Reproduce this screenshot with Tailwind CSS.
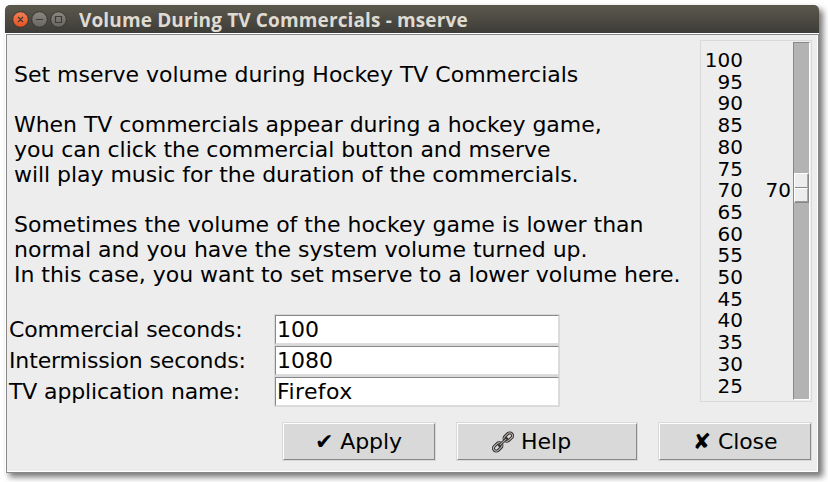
<!DOCTYPE html>
<html lang="en">
<head>
<meta charset="utf-8">
<title>Volume During TV Commercials - mserve</title>
<script src="https://cdn.jsdelivr.net/npm/@tailwindcss/browser@4"></script>
</head>
<body class="w-[828px] h-[482px] overflow-hidden bg-white pt-[5px] pl-[5px] font-['DejaVu_Sans',sans-serif] text-[22px] leading-[25px] text-black">
<main class="w-[814px] h-[468px] rounded-t-[5px] shadow-[4px_4px_6px_rgba(0,0,0,0.55)] bg-white flex flex-col">
  <header class="h-7 shrink-0 rounded-t-[5px] bg-linear-to-b from-[#5b584c] to-[#3d3c38] border-t border-[#55534a] flex items-center">
    <svg class="ml-[7px] shrink-0" width="56" height="18" viewBox="0 0 56 18" fill="none">
      <defs>
        <linearGradient id="r" x2="0" y2="1"><stop stop-color="#f28157"/><stop offset="1" stop-color="#e6501f"/></linearGradient>
        <linearGradient id="g" x2="0" y2="1"><stop stop-color="#8a887f"/><stop offset="1" stop-color="#66655f"/></linearGradient>
      </defs>
      <g stroke="#37352f" stroke-width="1">
        <circle cx="8.5" cy="8.5" r="7.8" fill="url(#r)"/>
        <circle cx="27.5" cy="8.5" r="7.8" fill="url(#g)"/>
        <circle cx="46.5" cy="8.5" r="7.8" fill="url(#g)"/>
      </g>
      <g stroke="#3c3b37" stroke-width="1.2"><path d="M6 6l5 5M11 6l-5 5M24 8.5h7M43.5 5.5h6v6h-6z"/></g>
    </svg>
    <h1 class="ml-[11px] whitespace-nowrap font-['Open_Sans',sans-serif] font-bold text-[19px] leading-[26px] tracking-[0.13px] text-[#dfdbd2]">Volume During TV Commercials - mserve</h1>
  </header>
  <div class="ml-px mt-px w-[813px] h-[439px] border border-[#888] bg-white pr-px pb-px">
    <div class="h-full bg-[#ededed] flex flex-col">
      <div class="flex h-[367px]">
        <section class="w-[693px] shrink-0 whitespace-nowrap">
          <div class="pt-[27px] pl-[7px] h-[279px]">
            <p class="tracking-[-0.01px]">Set mserve volume during Hockey TV Commercials</p>
            <p class="mt-[25px] tracking-[-0.045px]">When TV commercials appear during a hockey game,<br>you can click the commercial button and mserve<br>will play music for the duration of the commercials.</p>
            <p class="mt-[25px]">Sometimes the volume of the hockey game is lower than<br>normal and you have the system volume turned up.<br><span class="tracking-[-0.025px]">In this case, you want to set mserve to a lower volume here.</span></p>
          </div>
          <div class="grid grid-cols-[265px_286px] pl-[2px] auto-rows-[31px] leading-[31px]">
            <span class="tracking-[-0.13px]">Commercial seconds:</span>
            <span class="border border-[#d9d9d9]"><span class="block h-full bg-white border border-t-[#888] border-l-[#888] border-r-[#ddd] border-b-[#ddd] pl-px leading-[27px]">100</span></span>
            <span class="tracking-[-0.13px]">Intermission seconds:</span>
            <span class="border border-[#d9d9d9]"><span class="block h-full bg-white border border-t-[#888] border-l-[#888] border-r-[#ddd] border-b-[#ddd] pl-px leading-[27px]">1080</span></span>
            <span class="tracking-[-0.13px]">TV application name:</span>
            <span class="border border-[#d9d9d9]"><span class="block h-full bg-white border border-t-[#888] border-l-[#888] border-r-[#ddd] border-b-[#ddd] pl-px leading-[27px] tracking-[0.4px]">Firefox</span></span>
          </div>
        </section>
        <aside class="mt-[5px] w-[112px] h-[362px] border border-[#d9d9d9] flex text-[20px]">
          <div class="w-[42px] pt-[9px] text-right leading-[21.7px]">
            <div>100</div><div>95</div><div>90</div><div>85</div><div>80</div><div>75</div><div>70</div><div>65</div><div>60</div><div>55</div><div>50</div><div>45</div><div>40</div><div>35</div><div>30</div><div>25</div>
          </div>
          <div class="w-[48px] pt-[138px] text-right leading-[22px]">70</div>
          <div class="ml-[2px] mt-px w-[17px] h-[358px] bg-[#b3b3b3] border border-t-[#888] border-l-[#888] border-r-white border-b-white pt-[130px]">
            <div class="h-[30px] w-[15px] flex flex-col bg-[#ededed] border border-t-white border-l-white border-r-[#888] border-b-[#888]">
              <div class="h-[14px] border-b border-[#888] border-r border-r-[#aaa]"></div>
              <div class="h-[14px] border-t border-t-white border-b border-b-[#999] border-r border-r-[#aaa]"></div>
            </div>
          </div>
        </aside>
      </div>
      <div class="mt-5 ml-[275px] flex gap-5 leading-[36px] whitespace-nowrap">
        <button class="w-[154px] h-[39px] border border-[#d9d9d9]"><span class="flex justify-center h-full bg-[#d9d9d9] border border-t-white border-l-white border-r-[#888] border-b-[#888] pr-px tracking-[-0.1px]">✔ Apply</span></button>
        <button class="w-[182px] h-[39px] border border-[#d9d9d9]"><span class="flex h-full pl-[33px] bg-[#d9d9d9] border border-t-white border-l-white border-r-[#888] border-b-[#888]">
          <svg class="mt-[6px] mr-[6px] shrink-0" width="24" height="24" viewBox="0 0 24 24" fill="none">
            <g transform="rotate(-43 12 12)">
              <g stroke="#292725" stroke-width="3"><rect x="0" y="9.2" width="9.5" height="5.6" rx="2.8"/><rect x="14.5" y="9.2" width="9.5" height="5.6" rx="2.8"/></g>
              <g stroke="#b9b4ae" stroke-width="1.1"><rect x="0" y="9.2" width="9.5" height="5.6" rx="2.8"/><rect x="14.5" y="9.2" width="9.5" height="5.6" rx="2.8"/></g>
              <path d="M7 12h10" stroke="#292725" stroke-width="2.8" stroke-linecap="round"/><path d="M7.5 12h9" stroke="#b9b4ae" stroke-width="1"/>
            </g>
          </svg>Help</span></button>
        <button class="w-[154px] h-[39px] border border-[#d9d9d9]"><span class="flex justify-center h-full bg-[#d9d9d9] border border-t-white border-l-white border-r-[#888] border-b-[#888] tracking-[-0.1px]">✘ Close</span></button>
      </div>
    </div>
  </div>
</main>
</body>
</html>
